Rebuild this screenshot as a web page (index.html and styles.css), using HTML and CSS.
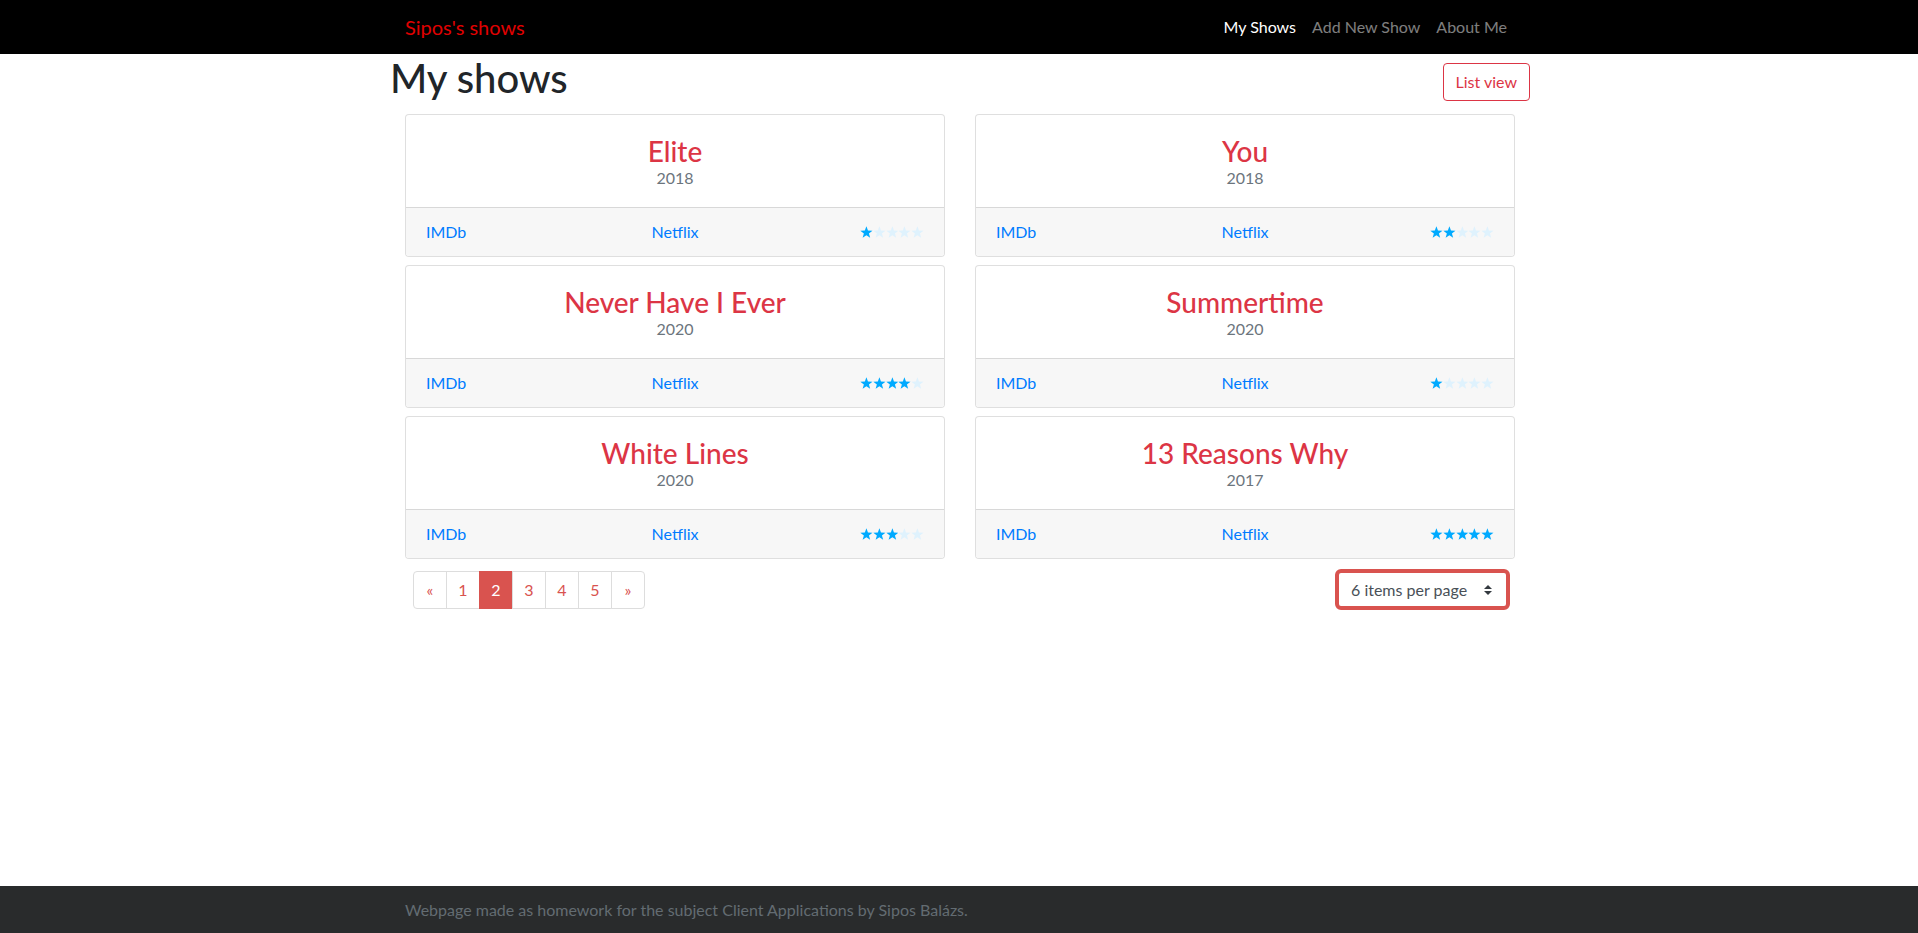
FILE: index.html
```html
<!DOCTYPE html>
<html lang="en">
<head>
<meta charset="utf-8">
<title>Sipos's shows</title>
<link rel="stylesheet" href="styles.css">
</head>
<body>
<nav class="navbar">
  <div class="container nav-inner">
    <a class="brand" href="#">Sipos's shows</a>
    <ul class="nav-links">
      <li><a class="nav-link active" href="#">My Shows</a></li>
      <li><a class="nav-link" href="#">Add New Show</a></li>
      <li><a class="nav-link" href="#">About Me</a></li>
    </ul>
  </div>
</nav>
<main class="main">
  <div class="container">
    <div class="page-head">
      <h1 class="page-title">My shows</h1>
      <button class="btn-outline">List view</button>
    </div>
    <div class="grid">
      <div class="card">
        <div class="card-body"><h3 class="show-title">Elite</h3><div class="show-year">2018</div></div>
        <div class="card-footer"><a class="l" href="#">IMDb</a><a class="c" href="#">Netflix</a><span class="stars r"><svg viewBox="0 0 24 24" class="on"><path d="M12 0.5L14.94 8.45L23.41 8.79L16.76 14.05L19.05 22.21L12 17.5L4.95 22.21L7.24 14.05L0.59 8.79L9.06 8.45Z"/></svg><svg viewBox="0 0 24 24"><path d="M12 0.5L14.94 8.45L23.41 8.79L16.76 14.05L19.05 22.21L12 17.5L4.95 22.21L7.24 14.05L0.59 8.79L9.06 8.45Z"/></svg><svg viewBox="0 0 24 24"><path d="M12 0.5L14.94 8.45L23.41 8.79L16.76 14.05L19.05 22.21L12 17.5L4.95 22.21L7.24 14.05L0.59 8.79L9.06 8.45Z"/></svg><svg viewBox="0 0 24 24"><path d="M12 0.5L14.94 8.45L23.41 8.79L16.76 14.05L19.05 22.21L12 17.5L4.95 22.21L7.24 14.05L0.59 8.79L9.06 8.45Z"/></svg><svg viewBox="0 0 24 24"><path d="M12 0.5L14.94 8.45L23.41 8.79L16.76 14.05L19.05 22.21L12 17.5L4.95 22.21L7.24 14.05L0.59 8.79L9.06 8.45Z"/></svg></span></div>
      </div>
      <div class="card">
        <div class="card-body"><h3 class="show-title">You</h3><div class="show-year">2018</div></div>
        <div class="card-footer"><a class="l" href="#">IMDb</a><a class="c" href="#">Netflix</a><span class="stars r"><svg viewBox="0 0 24 24" class="on"><path d="M12 0.5L14.94 8.45L23.41 8.79L16.76 14.05L19.05 22.21L12 17.5L4.95 22.21L7.24 14.05L0.59 8.79L9.06 8.45Z"/></svg><svg viewBox="0 0 24 24" class="on"><path d="M12 0.5L14.94 8.45L23.41 8.79L16.76 14.05L19.05 22.21L12 17.5L4.95 22.21L7.24 14.05L0.59 8.79L9.06 8.45Z"/></svg><svg viewBox="0 0 24 24"><path d="M12 0.5L14.94 8.45L23.41 8.79L16.76 14.05L19.05 22.21L12 17.5L4.95 22.21L7.24 14.05L0.59 8.79L9.06 8.45Z"/></svg><svg viewBox="0 0 24 24"><path d="M12 0.5L14.94 8.45L23.41 8.79L16.76 14.05L19.05 22.21L12 17.5L4.95 22.21L7.24 14.05L0.59 8.79L9.06 8.45Z"/></svg><svg viewBox="0 0 24 24"><path d="M12 0.5L14.94 8.45L23.41 8.79L16.76 14.05L19.05 22.21L12 17.5L4.95 22.21L7.24 14.05L0.59 8.79L9.06 8.45Z"/></svg></span></div>
      </div>
      <div class="card">
        <div class="card-body"><h3 class="show-title">Never Have I Ever</h3><div class="show-year">2020</div></div>
        <div class="card-footer"><a class="l" href="#">IMDb</a><a class="c" href="#">Netflix</a><span class="stars r"><svg viewBox="0 0 24 24" class="on"><path d="M12 0.5L14.94 8.45L23.41 8.79L16.76 14.05L19.05 22.21L12 17.5L4.95 22.21L7.24 14.05L0.59 8.79L9.06 8.45Z"/></svg><svg viewBox="0 0 24 24" class="on"><path d="M12 0.5L14.94 8.45L23.41 8.79L16.76 14.05L19.05 22.21L12 17.5L4.95 22.21L7.24 14.05L0.59 8.79L9.06 8.45Z"/></svg><svg viewBox="0 0 24 24" class="on"><path d="M12 0.5L14.94 8.45L23.41 8.79L16.76 14.05L19.05 22.21L12 17.5L4.95 22.21L7.24 14.05L0.59 8.79L9.06 8.45Z"/></svg><svg viewBox="0 0 24 24" class="on"><path d="M12 0.5L14.94 8.45L23.41 8.79L16.76 14.05L19.05 22.21L12 17.5L4.95 22.21L7.24 14.05L0.59 8.79L9.06 8.45Z"/></svg><svg viewBox="0 0 24 24"><path d="M12 0.5L14.94 8.45L23.41 8.79L16.76 14.05L19.05 22.21L12 17.5L4.95 22.21L7.24 14.05L0.59 8.79L9.06 8.45Z"/></svg></span></div>
      </div>
      <div class="card">
        <div class="card-body"><h3 class="show-title">Summertime</h3><div class="show-year">2020</div></div>
        <div class="card-footer"><a class="l" href="#">IMDb</a><a class="c" href="#">Netflix</a><span class="stars r"><svg viewBox="0 0 24 24" class="on"><path d="M12 0.5L14.94 8.45L23.41 8.79L16.76 14.05L19.05 22.21L12 17.5L4.95 22.21L7.24 14.05L0.59 8.79L9.06 8.45Z"/></svg><svg viewBox="0 0 24 24"><path d="M12 0.5L14.94 8.45L23.41 8.79L16.76 14.05L19.05 22.21L12 17.5L4.95 22.21L7.24 14.05L0.59 8.79L9.06 8.45Z"/></svg><svg viewBox="0 0 24 24"><path d="M12 0.5L14.94 8.45L23.41 8.79L16.76 14.05L19.05 22.21L12 17.5L4.95 22.21L7.24 14.05L0.59 8.79L9.06 8.45Z"/></svg><svg viewBox="0 0 24 24"><path d="M12 0.5L14.94 8.45L23.41 8.79L16.76 14.05L19.05 22.21L12 17.5L4.95 22.21L7.24 14.05L0.59 8.79L9.06 8.45Z"/></svg><svg viewBox="0 0 24 24"><path d="M12 0.5L14.94 8.45L23.41 8.79L16.76 14.05L19.05 22.21L12 17.5L4.95 22.21L7.24 14.05L0.59 8.79L9.06 8.45Z"/></svg></span></div>
      </div>
      <div class="card">
        <div class="card-body"><h3 class="show-title">White Lines</h3><div class="show-year">2020</div></div>
        <div class="card-footer"><a class="l" href="#">IMDb</a><a class="c" href="#">Netflix</a><span class="stars r"><svg viewBox="0 0 24 24" class="on"><path d="M12 0.5L14.94 8.45L23.41 8.79L16.76 14.05L19.05 22.21L12 17.5L4.95 22.21L7.24 14.05L0.59 8.79L9.06 8.45Z"/></svg><svg viewBox="0 0 24 24" class="on"><path d="M12 0.5L14.94 8.45L23.41 8.79L16.76 14.05L19.05 22.21L12 17.5L4.95 22.21L7.24 14.05L0.59 8.79L9.06 8.45Z"/></svg><svg viewBox="0 0 24 24" class="on"><path d="M12 0.5L14.94 8.45L23.41 8.79L16.76 14.05L19.05 22.21L12 17.5L4.95 22.21L7.24 14.05L0.59 8.79L9.06 8.45Z"/></svg><svg viewBox="0 0 24 24"><path d="M12 0.5L14.94 8.45L23.41 8.79L16.76 14.05L19.05 22.21L12 17.5L4.95 22.21L7.24 14.05L0.59 8.79L9.06 8.45Z"/></svg><svg viewBox="0 0 24 24"><path d="M12 0.5L14.94 8.45L23.41 8.79L16.76 14.05L19.05 22.21L12 17.5L4.95 22.21L7.24 14.05L0.59 8.79L9.06 8.45Z"/></svg></span></div>
      </div>
      <div class="card">
        <div class="card-body"><h3 class="show-title">13 Reasons Why</h3><div class="show-year">2017</div></div>
        <div class="card-footer"><a class="l" href="#">IMDb</a><a class="c" href="#">Netflix</a><span class="stars r"><svg viewBox="0 0 24 24" class="on"><path d="M12 0.5L14.94 8.45L23.41 8.79L16.76 14.05L19.05 22.21L12 17.5L4.95 22.21L7.24 14.05L0.59 8.79L9.06 8.45Z"/></svg><svg viewBox="0 0 24 24" class="on"><path d="M12 0.5L14.94 8.45L23.41 8.79L16.76 14.05L19.05 22.21L12 17.5L4.95 22.21L7.24 14.05L0.59 8.79L9.06 8.45Z"/></svg><svg viewBox="0 0 24 24" class="on"><path d="M12 0.5L14.94 8.45L23.41 8.79L16.76 14.05L19.05 22.21L12 17.5L4.95 22.21L7.24 14.05L0.59 8.79L9.06 8.45Z"/></svg><svg viewBox="0 0 24 24" class="on"><path d="M12 0.5L14.94 8.45L23.41 8.79L16.76 14.05L19.05 22.21L12 17.5L4.95 22.21L7.24 14.05L0.59 8.79L9.06 8.45Z"/></svg><svg viewBox="0 0 24 24" class="on"><path d="M12 0.5L14.94 8.45L23.41 8.79L16.76 14.05L19.05 22.21L12 17.5L4.95 22.21L7.24 14.05L0.59 8.79L9.06 8.45Z"/></svg></span></div>
      </div>
    </div>
    <div class="controls">
      <ul class="pagination">
        <li class="page-item"><a class="page-link" href="#">&laquo;</a></li>
        <li class="page-item"><a class="page-link" href="#">1</a></li>
        <li class="page-item active"><a class="page-link" href="#">2</a></li>
        <li class="page-item"><a class="page-link" href="#">3</a></li>
        <li class="page-item"><a class="page-link" href="#">4</a></li>
        <li class="page-item"><a class="page-link" href="#">5</a></li>
        <li class="page-item"><a class="page-link" href="#">&raquo;</a></li>
      </ul>
      <div class="select">
        <span class="select-text">6 items per page</span>
        <svg class="select-arrow" viewBox="0 0 4 5" width="8" height="10"><path d="M2 0L0 2h4zm0 5L0 3h4z"/></svg>
      </div>
    </div>
  </div>
</main>
<footer class="footer">
  <div class="container">Webpage made as homework for the subject Client Applications by Sipos Balázs.</div>
</footer>
</body>
</html>
```

FILE: styles.css
```css
* { box-sizing: border-box; }

html, body { margin: 0; padding: 0; }

body {
  font-family: "Segoe UI", Lato, "Noto Sans", sans-serif;
  font-size: 16px;
  line-height: 1.5;
  color: #212529;
  background: #fff;
  min-height: 100vh;
  display: flex;
  flex-direction: column;
}

a { text-decoration: none; }

.container {
  width: 1140px;
  margin-left: calc(50% - 569px);
  padding: 0 15px;
}

/* navbar */
.navbar {
  background: #000;
  height: 54px;
}
.nav-inner {
  height: 54px;
  display: flex;
  align-items: center;
  justify-content: space-between;
}
.brand {
  color: #e00000;
  font-size: 20px;
  line-height: 30px;
}
.nav-links {
  list-style: none;
  margin: 0;
  padding: 0;
  display: flex;
}
.nav-link {
  display: block;
  padding: 0 8px;
  color: rgba(255, 255, 255, 0.5);
  line-height: 24px;
}
.nav-link.active { color: #fff; }

/* main */
.main { flex: 1; }

.page-head {
  margin: 0 -15px 12px;
  display: flex;
  justify-content: space-between;
  align-items: flex-start;
}
.page-title {
  margin: 0;
  font-size: 40px;
  font-weight: 500;
  line-height: 48px;
}
.btn-outline {
  margin-top: 9px;
  font-family: inherit;
  font-size: 16px;
  line-height: 24px;
  padding: 6px 12px;
  color: #dc3545;
  background: transparent;
  border: 1px solid #dc3545;
  border-radius: 4px;
}

.grid {
  display: grid;
  grid-template-columns: 1fr 1fr;
  column-gap: 30px;
  row-gap: 8px;
}

.card {
  border: 1px solid rgba(0, 0, 0, 0.125);
  border-radius: 4px;
  background: #fff;
  overflow: hidden;
}
.card-body {
  padding: 26px 20px 17px;
  text-align: center;
}
.show-title {
  margin: 0;
  font-size: 28px;
  font-weight: 500;
  line-height: 20px;
  color: #dc3545;
}
.show-year {
  margin-top: 5px;
  color: #6c757d;
  line-height: 24px;
}
.card-footer {
  border-top: 1px solid rgba(0, 0, 0, 0.125);
  background: #f7f7f7;
  padding: 12px 20px;
  display: grid;
  grid-template-columns: 1fr 1fr 1fr;
  align-items: center;
  line-height: 24px;
}
.card-footer a { color: #007bff; }
.l { justify-self: start; }
.c { justify-self: center; }
.r { justify-self: end; }

.stars {
  display: flex;
  align-items: center;
  height: 24px;
}
.stars svg {
  width: 12.8px;
  height: 12.8px;
  fill: #dff2fd;
}
.stars svg.on { fill: #00aaff; }

/* controls */
.controls {
  margin-top: 10px;
  display: flex;
  justify-content: space-between;
  align-items: center;
}
.pagination {
  list-style: none;
  margin: 0 0 0 8px;
  padding: 0;
  display: flex;
}
.page-link {
  display: block;
  min-width: 34px;
  text-align: center;
  padding: 8px 11px;
  line-height: 20px;
  color: #d9534f;
  background: #fff;
  border: 1px solid #ddd;
  margin-left: -1px;
}
.page-item:first-child .page-link {
  margin-left: 0;
  border-radius: 4px 0 0 4px;
}
.page-item:last-child .page-link { border-radius: 0 4px 4px 0; }
.page-item.active .page-link {
  background: #d9534f;
  border-color: #d9534f;
  color: #fff;
}

.select {
  margin-right: 5px;
  width: 175px;
  height: 41px;
  border: 4px solid #d9534f;
  border-radius: 6px;
  padding: 0 14px 0 12px;
  display: flex;
  align-items: center;
  justify-content: space-between;
  color: #495057;
}
.select-arrow { fill: #343a40; }

/* footer */
.footer {
  background: #292b2c;
  height: 47px;
  display: flex;
  align-items: center;
  color: #636c72;
}
```
